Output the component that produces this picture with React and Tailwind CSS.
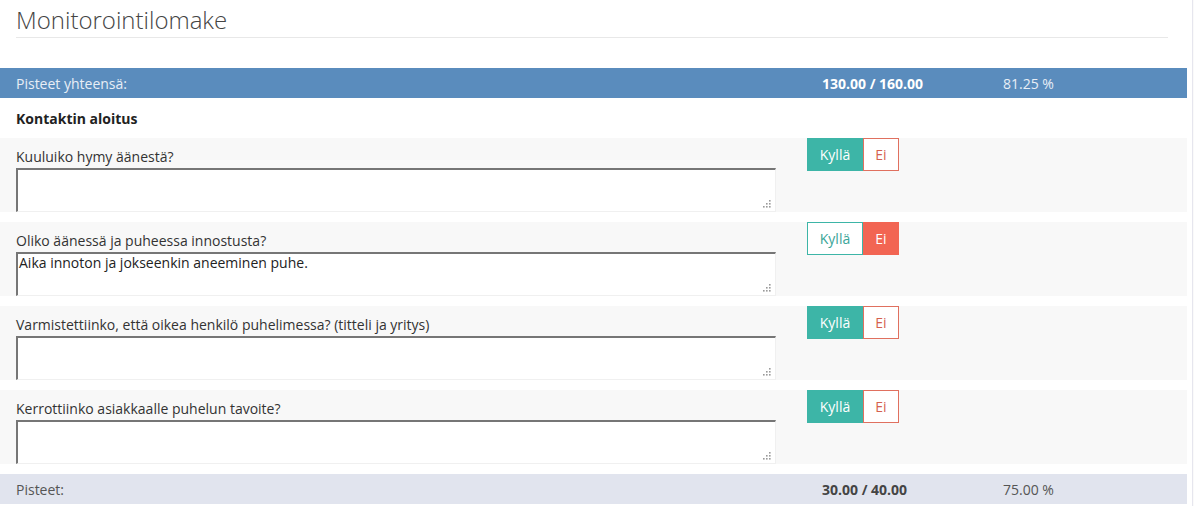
import React from "react";

const rows = [
  { q: "Kuuluiko hymy äänestä?", yes: true, text: "" },
  { q: "Oliko äänessä ja puheessa innostusta?", yes: false, text: "Aika innoton ja jokseenkin aneeminen puhe." },
  { q: "Varmistettiinko, että oikea henkilö puhelimessa? (titteli ja yritys)", yes: true, text: "" },
  { q: "Kerrottiinko asiakkaalle puhelun tavoite?", yes: true, text: "" },
];

function Grip() {
  return (
    <svg width="9" height="9" viewBox="0 0 9 9" className="absolute right-[4px] bottom-[3px]">
      {[
        [7, 1], [4, 4], [7, 4], [1, 7], [4, 7], [7, 7],
      ].map(([x, y], i) => (
        <rect key={i} x={x} y={y} width="1.6" height="1.6" fill="#9a9a9a" />
      ))}
    </svg>
  );
}

function Row({ r }) {
  return (
    <div className="flex bg-[#f8f8f8] h-[74px]">
      <div className="pl-4 w-[776px] flex flex-col">
        <div className="pt-[9px] h-[30px] text-[14px] leading-[20px] text-[#333]">{r.q}</div>
        <div className="relative flex-1 bg-white border-t-2 border-l-2 border-t-[#767676] border-l-[#767676] border-r border-b border-r-[#f0f0f0] border-b-[#f0f0f0] pl-[1px] text-[14px] leading-[17px] text-[#222]">
          {r.text}
          <Grip />
        </div>
      </div>
      <div className="ml-[31px] flex h-[33px] text-[14px]">
        {r.yes ? (
          <>
            <div className="w-[56px] flex items-center justify-center bg-[#3db5a7] border border-[#3db5a7] text-white">Kyllä</div>
            <div className="w-[36px] flex items-center justify-center bg-white border border-[#e0705f] text-[#d4604f]">Ei</div>
          </>
        ) : (
          <>
            <div className="w-[56px] flex items-center justify-center bg-white border border-[#3db5a7] text-[#3aa598]">Kyllä</div>
            <div className="w-[36px] flex items-center justify-center bg-[#f26553] border border-[#f26553] text-white">Ei</div>
          </>
        )}
      </div>
    </div>
  );
}

export default function App() {
  return (
    <div className="flex w-[1194px] h-[506px] bg-white overflow-hidden" style={{ fontFamily: '"Open Sans", "DejaVu Sans", sans-serif' }}>
      <div className="w-[1187px] flex flex-col">
        <div className="mx-4 w-[1152px] h-[38px] border-b border-[#e8e8e8] text-[24px] font-light leading-[38px] text-[#444] pt-[1px]">
          Monitorointilomake
        </div>
        <div className="h-[30px] mt-[30px] bg-[#5a8cbd] flex items-center text-[14px] text-white">
          <div className="w-[806px] pl-4 text-[#e8eef6]">Pisteet yhteensä:</div>
          <div className="w-[181px] pl-4 font-bold">130.00 / 160.00</div>
          <div className="pl-4 text-[#e8eef6]">81.25 %</div>
        </div>
        <div className="h-[40px] pl-4 flex items-center text-[14px] font-bold text-[#222]">Kontaktin aloitus</div>
        <div className="flex flex-col gap-[10px]">
          {rows.map((r, i) => (
            <Row key={i} r={r} />
          ))}
        </div>
        <div className="h-[30px] mt-[10px] bg-[#e1e4ee] flex items-center text-[14px] text-[#555]">
          <div className="w-[806px] pl-4">Pisteet:</div>
          <div className="w-[181px] pl-4 font-bold text-[#444]">30.00 / 40.00</div>
          <div className="pl-4">75.00 %</div>
        </div>
      </div>
      <div className="w-[5px]" />
      <div className="w-[1px] bg-[#e6e6ee]" />
      <div className="w-[1px] bg-[#fafafa]" />
    </div>
  );
}
